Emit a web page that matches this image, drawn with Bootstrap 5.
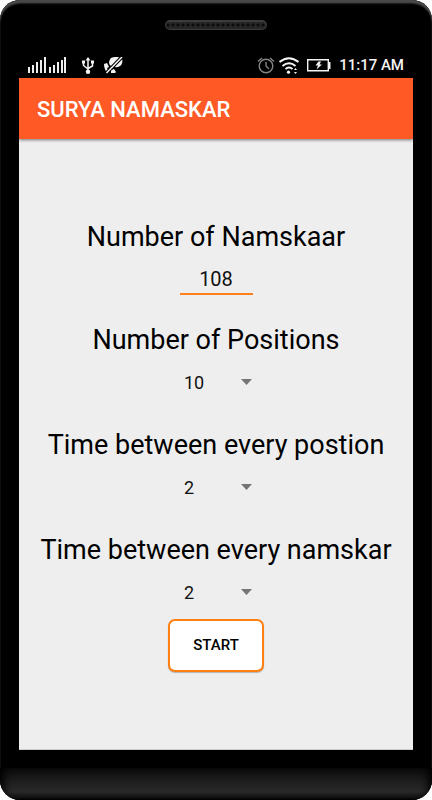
<!DOCTYPE html>
<html lang="en">
<head>
<meta charset="utf-8">
<meta name="viewport" content="width=device-width, initial-scale=1">
<title>Surya Namaskar</title>
<link href="https://cdn.jsdelivr.net/npm/bootstrap@5.3.0/dist/css/bootstrap.min.css" rel="stylesheet">
<style>
body { font-family: Roboto, "Liberation Sans", sans-serif; color: #000; background: #fff; }
.phone { background: #000; border-radius: 20px; overflow: hidden; box-shadow: inset 0 3px 1px #484848, inset 0 4px 2px #222; }
.speaker-area { padding-top: 20px; height: 52px; }
.speaker { width: 102px; height: 10px; border: 1px solid #3c3c3c; border-top-width: 2px; background: radial-gradient(circle at 2px 3px, #0c0c0c 1px, #262626 2px) 0 0 / 5px 7px; }
.status { height: 26px; padding: 0 9px; margin: 0 19px; color: #f4f4f4; font-size: 15px; line-height: 26px; font-weight: 500; }
.screen { margin: 0 19px; background: #eee; border-bottom: 1px solid #ccc; }
.app-bar { height: 61px; padding: 3px 18px 0; background: #ff5925; box-shadow: 0 1px 3px rgba(0,0,0,.5); }
.app-title { font-size: 22px; line-height: 28px; font-weight: 500; color: #fff; }
.fields { padding-top: 80px; }
.field { margin-bottom: 24px; }
.field-last { margin-bottom: 6px; }
.field-label { font-size: 27px; line-height: 36px; margin-bottom: 4px; white-space: nowrap; }
.count-input { width: 73px; height: 36px; margin-bottom: 3px; padding: 6px 0 0; border: 0; border-bottom: 2px solid #ff7f1a; border-radius: 0; background: transparent; color: #111; font-size: 20px; line-height: 28px; text-align: center; }
.spinner { width: 80px; height: 41px; padding: 0 24px 0 8px; border: 0; color: #111; font-size: 18px; line-height: 41px; background-color: transparent; background-image: url("data:image/svg+xml,%3Csvg xmlns='http://www.w3.org/2000/svg' viewBox='0 0 11 6'%3E%3Cpath d='M0 0h11L5.500 6z' fill='%23757575'/%3E%3C/svg%3E"); background-size: 11px 6px; background-position: right 4px top 17px; }
.start { width: 96px; height: 53px; border: 2px solid #ff7f10; border-radius: 7px; background: #fff; color: #000; font-size: 15px; font-weight: 500; box-shadow: 0 1px 1px rgba(0,0,0,.25); }
.chin-gap { height: 18px; }
.chin { height: 32px; background: linear-gradient(#0c0c0c, #252525 60%, #282828 75%, #111 94%, #000); box-shadow: inset 8px 0 8px -4px #000, inset -8px 0 8px -4px #000; }
</style>
</head>
<body>
<div class="phone d-flex flex-column min-vh-100">
  <div class="speaker-area d-flex justify-content-center"><div class="speaker rounded-pill"></div></div>
  <div class="status d-flex align-items-center justify-content-between">
    <div class="d-flex align-items-center">
      <svg width="38" height="16" viewBox="0 0 38 16" fill="#eee" aria-label="Signal" role="img">
        <path d="M0 10h2v6H0zM4 8h2v8H4zM8 5h2v11H8zM12 3h2v13h-2zM16 0h2v16h-2zM21 10h2v6h-2zM25 8h2v8h-2zM29 5h2v11h-2zM33 3h2v13h-2zM36 0h2v16h-2z"/>
      </svg>
      <svg class="ms-3" width="12" height="17" viewBox="0 0 12 17" fill="none" stroke="#f4f4f4" stroke-width="1.500" aria-label="USB" role="img">
        <path d="M6 2v13M1.500 5v3.500L6 12M10.500 5.500V9L6 11.500"/>
        <path d="M6 0l2.500 3.500h-5zM0 3.500h3v3H0zM9 3.500h3v3H9z" fill="#f4f4f4" stroke="none"/>
        <circle cx="6" cy="14.800" r="2.200" fill="#f4f4f4" stroke="none"/>
      </svg>
      <svg class="ms-2" width="22" height="17" viewBox="-3 0 22 17" aria-label="Notifications off" role="img">
        <path d="M6 1c3-1.500 9-1.500 11 1 1 2 0 6-2 7-3 2-6 1-9 0C3 7 4 3 6 1z" fill="#f4f4f4"/>
        <path d="M-1 7l3-1 2 4-2 1 2 4-2 1C0 13-1 10-1 7zM6 13l3-1 2 3-1 1H6z" fill="#f4f4f4"/>
        <path d="M1.500 16L17 0" stroke="#000" stroke-width="3.600"/>
        <path d="M1.500 16L17 0" stroke="#f4f4f4" stroke-width="1.500"/>
      </svg>
    </div>
    <div class="d-flex align-items-center">
      <svg width="18" height="17" viewBox="0 0 18 17" fill="none" stroke="#858585" stroke-width="1.400" aria-label="Alarm" role="img">
        <circle cx="9" cy="9" r="6.800"/><path d="M9 5v4l3 3M1 4.500L5 1M17 4.500L13 1"/>
      </svg>
      <svg class="ms-1" width="20" height="17" viewBox="0 0 20 17" fill="none" stroke="#f4f4f4" stroke-width="2" aria-label="Wi-Fi" role="img">
        <path d="M.5 5Q10-2.500 19.500 5M3.500 9Q10 3.500 16.500 9M6.500 12Q10 9 13.500 12"/>
        <g fill="#f4f4f4" stroke="none"><circle cx="9.500" cy="15.200" r="1.600"/><path d="M15 13l1.500-2 1.500 2zM15 15l1.500 2 1.500-2z"/></g>
      </svg>
      <svg class="ms-2" width="24" height="13" viewBox="0 0 24 13" aria-label="Charging" role="img">
        <path d="M.7.700h20.600v11.100H.7z" fill="none" stroke="#f4f4f4" stroke-width="1.400"/>
        <path d="M22 3h1.500v7H22zM11.500 2.500h2.500l-1.500 3H15l-5.500 5 1.500-4H8.500z" fill="#f4f4f4"/>
      </svg>
      <span class="ms-2">11:17 AM</span>
    </div>
  </div>
  <main class="screen flex-grow-1">
    <header class="app-bar d-flex align-items-center"><h1 class="app-title m-0">SURYA NAMASKAR</h1></header>
    <form class="fields d-flex flex-column align-items-center">
      <div class="field d-flex flex-column align-items-center">
        <label class="field-label" for="count">Number of Namskaar</label>
        <input class="count-input form-control shadow-none" id="count" type="text" inputmode="numeric" value="108">
      </div>
      <div class="field d-flex flex-column align-items-center">
        <label class="field-label" for="positions">Number of Positions</label>
        <select class="spinner form-select" id="positions"><option>10</option></select>
      </div>
      <div class="field d-flex flex-column align-items-center">
        <label class="field-label" for="position-time">Time between every postion</label>
        <select class="spinner form-select" id="position-time"><option>2</option></select>
      </div>
      <div class="field field-last d-flex flex-column align-items-center">
        <label class="field-label" for="round-time">Time between every namskar</label>
        <select class="spinner form-select" id="round-time"><option>2</option></select>
      </div>
      <button class="start btn p-0" type="button">START</button>
    </form>
  </main>
  <div class="chin-gap"></div>
  <div class="chin"></div>
</div>
<script src="https://cdn.jsdelivr.net/npm/bootstrap@5.3.0/dist/js/bootstrap.bundle.min.js"></script>
</body>
</html>
